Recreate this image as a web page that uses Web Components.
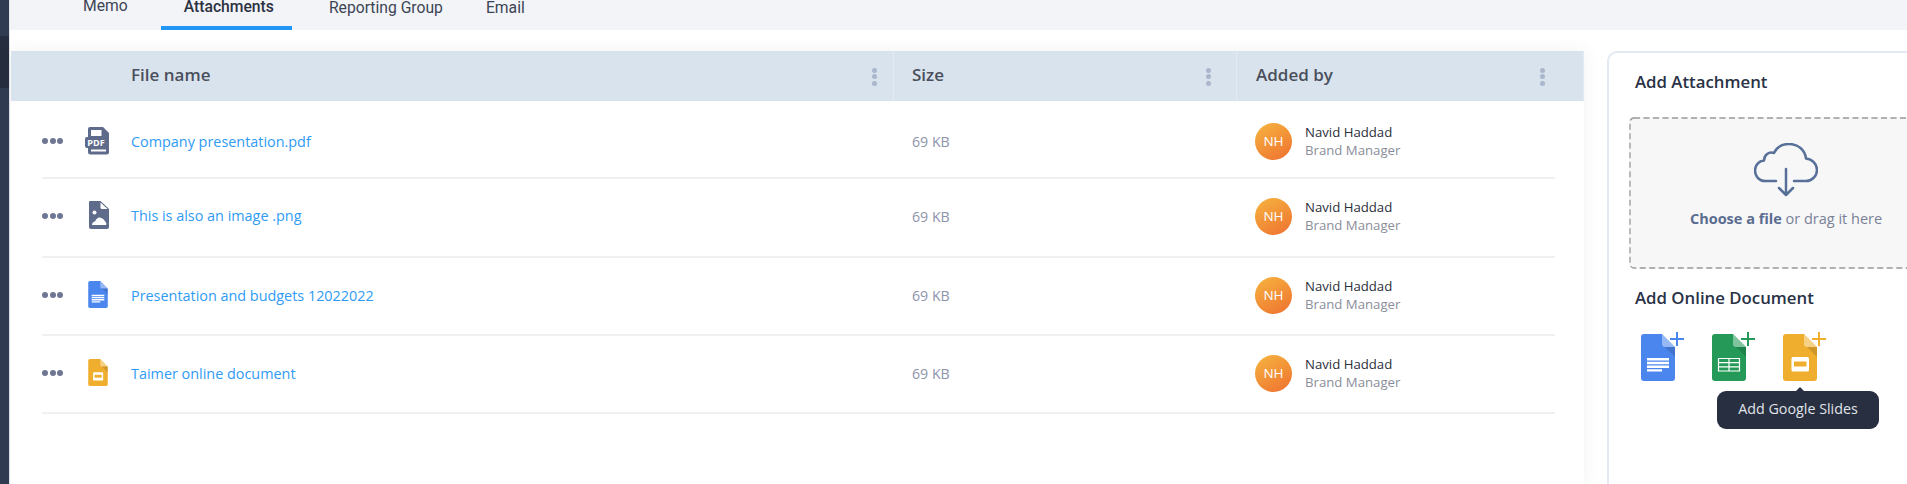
<!DOCTYPE html>
<html>
<head>
<meta charset="utf-8">
<title>Attachments</title>
<style>
  html, body { margin: 0; padding: 0; height: 484px; overflow: hidden; background: #fff; }
  body { font-family: "Open Sans", "Liberation Sans", sans-serif; }
</style>
</head>
<body>
<attachments-page>
  <tab-bar slot="tabs">
    <tab-item style="--gap:73px;--lh:12px">Memo</tab-item>
    <tab-item active style="--gap:33px;--lh:14px">Attachments</tab-item>
    <tab-item style="--gap:37px">Reporting Group</tab-item>
    <tab-item style="--gap:43px">Email</tab-item>
  </tab-bar>

  <file-table slot="table">
    <head-cell slot="head" style="--w:883px;--pad:120px;--kebab:16px">File name</head-cell>
    <head-cell slot="head" style="--w:343px;--pad:18px;--kebab:25px">Size</head-cell>
    <head-cell slot="head" style="--w:347px;--pad:19px;--kebab:38px">Added by</head-cell>

    <file-row slot="rows" style="--top:4px;--bottom:0px">
      <file-icon slot="icon" kind="pdf"></file-icon>
      <span slot="name">Company presentation.pdf</span>
      <span slot="size">69 KB</span>
      <user-chip slot="by" initials="NH" name="Navid Haddad" role="Brand Manager"></user-chip>
    </file-row>
    <file-row slot="rows" style="--h:79px;--bottom:3px">
      <file-icon slot="icon" kind="image" style="margin:-2px 0 0 -2px"></file-icon>
      <span slot="name" style="margin-top:-2px">This is also an image .png</span>
      <span slot="size">69 KB</span>
      <user-chip slot="by" initials="NH" name="Navid Haddad" role="Brand Manager"></user-chip>
    </file-row>
    <file-row slot="rows">
      <file-icon slot="icon" kind="docs"></file-icon>
      <span slot="name">Presentation and budgets 12022022</span>
      <span slot="size">69 KB</span>
      <user-chip slot="by" initials="NH" name="Navid Haddad" role="Brand Manager"></user-chip>
    </file-row>
    <file-row slot="rows">
      <file-icon slot="icon" kind="slides" style="margin-top:-1px"></file-icon>
      <span slot="name">Taimer online document</span>
      <span slot="size">69 KB</span>
      <user-chip slot="by" initials="NH" name="Navid Haddad" role="Brand Manager"></user-chip>
    </file-row>
  </file-table>

  <add-panel slot="side">
    <drop-zone slot="drop"></drop-zone>
    <add-doc slot="docs" kind="docs"></add-doc>
    <add-doc slot="docs" kind="sheets"></add-doc>
    <add-doc slot="docs" kind="slides" tip="Add Google Slides"></add-doc>
  </add-panel>
</attachments-page>

<script>
(function() {

  // page sheet used by all the google style icons, viewBox is 34x47
  const SHEET = 'M3 0H21L34 13V44a3 3 0 0 1-3 3H3a3 3 0 0 1-3-3V3a3 3 0 0 1 3-3z';
  const FOLD = '<path d="M21 0L34 13H24a3 3 0 0 1-3-3z" fill="#fff" fill-opacity=".42"/>' +
               '<path d="M24 13L34 23V13z" fill="#000" fill-opacity=".14"/>';

  const docArt = {
    docs: { color: '#4a86ee', inner:
      '<path d="M6 24h22v2.4H6zM6 27.8h22v2.4H6zM6 31.5h22v2.4H6zM6 35.2h15v2.2H6z" fill="#fff"/>' },
    sheets: { color: '#259a58', inner:
      '<path d="M6.5 24.5h21v12.5h-21zM6.5 28.6h21M6.5 32.8h21M17 24.5v12.5" fill="none" stroke="#fff" stroke-width="1.2"/>' },
    slides: { color: '#f0ae2e', inner:
      '<rect x="8.5" y="23" width="17.5" height="14.5" rx="1.5" fill="#fff"/><rect x="11" y="27.5" width="12.5" height="5" fill="#f0ae2e"/>' }
  };

  function define(name, html) {
    const template = document.createElement('template');
    template.innerHTML = html;
    class Comp extends HTMLElement {
      constructor() {
        super();
        this.attachShadow({ mode: 'open' });
        this.shadowRoot.appendChild(template.content.cloneNode(true));
      }
    }
    customElements.define(name, Comp);
  }

  define('attachments-page', `
    <style>
      :host { display: flex; height: 484px; width: 1907px; overflow: hidden; color: #2a3246; }
      .rail { flex: none; width: 9px; background: #2f3c52; border-right: 1px solid #e4e6ea; display: flex; flex-direction: column; }
      .rail i { display: block; height: 52px; margin-top: 36px; background: #252d3e; }
      .main { flex: 1; min-width: 0; display: flex; flex-direction: column; }
      .content { flex: 1; display: flex; padding: 21px 0 0 1px; min-height: 0; }
    </style>
    <div class="rail"><i></i></div>
    <div class="main">
      <slot name="tabs"></slot>
      <div class="content">
        <slot name="table"></slot>
        <slot name="side"></slot>
      </div>
    </div>
  `);

  define('tab-bar', `
    <style>
      :host { display: flex; flex: none; height: 30px; background: #f2f4f8; align-items: stretch; overflow: hidden; }
    </style>
    <slot></slot>
  `);

  define('tab-item', `
    <style>
      :host { display: block; margin-left: var(--gap, 0); font: 15.7px/var(--lh, 16px) Roboto, "Liberation Sans", sans-serif; color: #3d4454; box-sizing: border-box; height: 30px; white-space: nowrap; }
      :host([active]) { font-weight: 500; color: #2b3140; padding: 0 18px 0 23px; border-bottom: 4px solid #2196f3; }
    </style>
    <slot></slot>
  `);

  define('file-table', `
    <style>
      :host { display: block; flex: none; width: 1573px; background: #fff; box-shadow: 0 0 16px rgba(40,50,70,.07); }
      .head { display: flex; height: 50px; background: #d9e3ed; }
      .rows { display: flex; flex-direction: column; padding: 0 29px 0 31px; }
    </style>
    <div class="head"><slot name="head"></slot></div>
    <div class="rows"><slot name="rows"></slot></div>
  `);

  define('head-cell', `
    <style>
      :host { display: flex; align-items: center; flex: none; box-sizing: border-box; width: var(--w); padding-left: var(--pad); padding-right: var(--kebab); border-right: 1px solid #e3eaf1; font-size: 17px; font-weight: 600; color: #4a4f5c; }
      :host(:last-child) { border-right: 0; }
      .label { flex: 1; margin-top: -3px; }
      .kebab { display: flex; flex-direction: column; gap: 1.5px; margin-top: 1px; }
      .kebab i { display: block; width: 5px; height: 5px; border-radius: 50%; background: #a9b6cc; }
    </style>
    <span class="label"><slot></slot></span>
    <span class="kebab"><i></i><i></i><i></i></span>
  `);

  define('file-row', `
    <style>
      :host { display: grid; grid-template-columns: 46px 43px 781px 343px 1fr; align-items: center; box-sizing: border-box; height: var(--h, 78px); padding-top: var(--top, 0); padding-bottom: var(--bottom, 2px); border-bottom: 2px solid #eef0f2; }
      .dots { display: flex; gap: 1.5px; }
      .dots i { display: block; width: 6px; height: 6px; border-radius: 50%; background: #6f7693; }
      ::slotted([slot=name]) { display: block; font-size: 14.4px; color: #2f9bf5; }
      ::slotted([slot=size]) { font-size: 14.2px; color: #8e93ac; }
    </style>
    <div class="dots"><i></i><i></i><i></i></div>
    <div><slot name="icon"></slot></div>
    <div><slot name="name"></slot></div>
    <div><slot name="size"></slot></div>
    <div><slot name="by"></slot></div>
  `);

  class FileIcon extends HTMLElement {
    connectedCallback() {
      const kind = this.getAttribute('kind');
      let art;
      if (kind === 'pdf') {
        art = `<svg width="26" height="28" viewBox="0 0 26 28">
          <path d="M5 0H18L24 6V25a2.500 2.500 0 0 1-2.500 2.500H5.500A2.500 2.500 0 0 1 3 25V2a2 2 0 0 1 2-2z" fill="#5f6b8b"/>
          <path d="M6 3H16.500V9H6z" fill="#fff"/>
          <rect x="0" y="10" width="22" height="11" rx="2" fill="#5f6b8b"/>
          <text x="11" y="18.800" text-anchor="middle" font-family="Open Sans, Liberation Sans, sans-serif" font-weight="700" font-size="9" fill="#fff">PDF</text>
          <path d="M6 22.500H21V24.500H6z" fill="#fff"/>
        </svg>`;
      } else if (kind === 'image') {
        art = `<svg width="26" height="28" viewBox="0 0 26 28">
          <path d="M4 0H14.500L23 8V26a2 2 0 0 1-2 2H5a2 2 0 0 1-2-2V1a1 1 0 0 1 1-1z" fill="#5f6b8b"/>
          <path d="M14.500 1.500L21.500 8H16a1.500 1.500 0 0 1-1.500-1.500z" fill="#fff"/>
          <circle cx="8.500" cy="11.500" r="2" fill="#fff"/>
          <path d="M6 24C6 22 7.500 20.500 9 20.500C10 17.500 13 15.500 15 17C17 17 19 20 20 21.500C20.500 22.500 20.500 23.500 20 24z" fill="#fff"/>
        </svg>`;
      } else {
        const d = docArt[kind];
        art = `<svg width="20" height="27" viewBox="0 0 34 47" style="margin-left:3px">
          <path d="${SHEET}" fill="${d.color}"/>${FOLD}${d.inner}</svg>`;
      }
      this.attachShadow({ mode: 'open' }).innerHTML =
        `<style>:host{display:block;margin-left:-3px;width:26px;height:28px}svg{display:block}</style>${art}`;
    }
  }
  customElements.define('file-icon', FileIcon);

  class UserChip extends HTMLElement {
    connectedCallback() {
      this.attachShadow({ mode: 'open' }).innerHTML = `
        <style>
          :host { display: flex; align-items: center; gap: 13px; }
          .avatar { width: 37px; height: 37px; border-radius: 50%; display: flex; align-items: center; justify-content: center; background: linear-gradient(150deg, #f6b53f, #ee7030); color: #fff; font-size: 13.500px; }
          .name, .role { font-size: 13.2px; line-height: 18.500px; }
          .name { color: #2b2f3a; }
          .role { color: #8b8e99; }
        </style>
        <div class="avatar">${this.getAttribute('initials')}</div>
        <div><div class="name">${this.getAttribute('name')}</div><div class="role">${this.getAttribute('role')}</div></div>`;
    }
  }
  customElements.define('user-chip', UserChip);

  define('add-panel', `
    <style>
      :host { display: block; flex: none; box-sizing: border-box; width: 360px; height: 470px; margin-left: 23px; padding: 18px 20px 0; border: 2px solid #e3e9f2; border-radius: 10px; background: #fff; }
      h3 { margin: 0; font-size: 16.800px; line-height: 22px; font-weight: 600; color: #2a3246; }
      .t1 { margin-left: 6px; }
      .t2 { margin: 18px 0 0 6px; }
      .drop { margin-top: 24px; }
      .docs { display: flex; gap: 27px; margin: 23px 0 0 12px; }
    </style>
    <h3 class="t1">Add Attachment</h3>
    <div class="drop"><slot name="drop"></slot></div>
    <h3 class="t2">Add Online Document</h3>
    <div class="docs"><slot name="docs"></slot></div>
  `);

  define('drop-zone', `
    <style>
      :host { display: flex; flex-direction: column; align-items: center; position: relative; box-sizing: border-box; width: 314px; height: 152px; padding-top: 26px; border-radius: 4px; background: #f7f7f8; }
      .dash { position: absolute; left: 0; top: 0; width: 100%; height: 100%; fill: none; stroke: #9a9a9a; stroke-width: 1.300; stroke-dasharray: 6 3.500; }
      .cloud { display: block; }
      p { margin: 12px 0 0; font-size: 14.500px; line-height: 20px; color: #7a8197; }
      b { font-weight: 700; color: #5a6c8f; }
    </style>
    <svg class="dash"><rect x="1" y="1" width="312" height="150" rx="4"/></svg>
    <svg class="cloud" width="64" height="54" viewBox="0 0 64 54" fill="none" stroke="#587098" stroke-width="2.500" stroke-linecap="round" stroke-linejoin="round">
      <path d="M22 38H11C5 38 1 33 1 27.500C1 22 5 18 10 17.500C10 12 15 8 20 10C23 4 29 1 35 1C44 1 51 7 52 15.500C58 16 63 21 63 27C63 33 58 38 52 38H40"/>
      <path d="M32 26V52M25 45L32 52L39 45"/>
    </svg>
    <p><b>Choose a file</b> or drag it here</p>
  `);

  class AddDoc extends HTMLElement {
    connectedCallback() {
      const d = docArt[this.getAttribute('kind')];
      const tip = this.getAttribute('tip');
      this.attachShadow({ mode: 'open' }).innerHTML = `
        <style>
          :host { display: block; position: relative; width: 44px; height: 49px; }
          svg { display: block; }
          .tip { position: absolute; left: -66px; top: 59px; width: 162px; height: 38px; box-sizing: border-box; border-radius: 9px; background: #272f41; color: #e0e3e8; font-size: 14.300px; line-height: 35px; text-align: center; white-space: nowrap; }
          .tip::before { content: ""; position: absolute; left: 78px; top: -4px; border: 5px solid transparent; border-top: 0; border-bottom-color: #272f41; }
        </style>
        <svg width="44" height="49" viewBox="0 -2 44 49">
          <path d="${SHEET}" fill="${d.color}"/>${FOLD}${d.inner}
          <path d="M36 -2V12M29 5H43" stroke="${d.color}" stroke-width="2" fill="none"/>
        </svg>
        ${tip ? `<div class="tip">${tip}</div>` : ''}`;
    }
  }
  customElements.define('add-doc', AddDoc);

})();
</script>
</body>
</html>
